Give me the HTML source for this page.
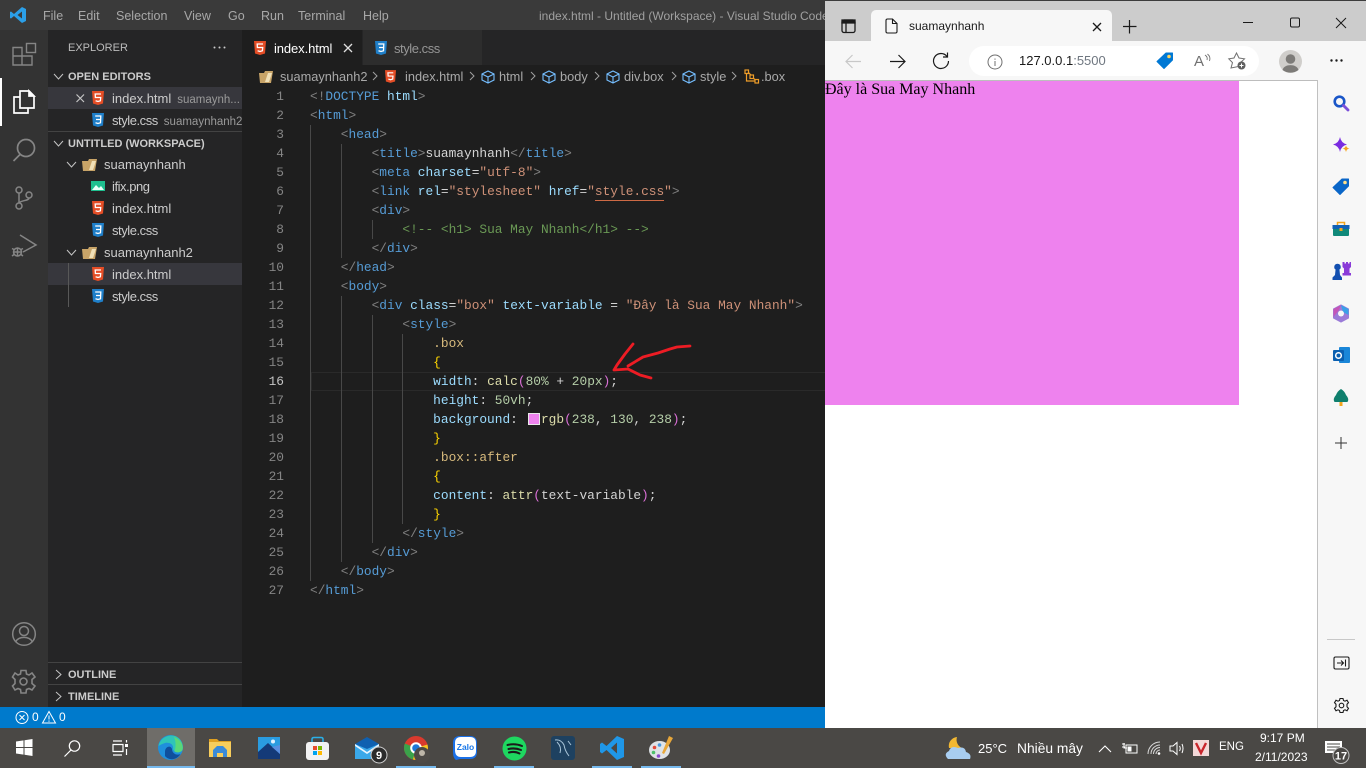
<!DOCTYPE html>
<html><head><meta charset="utf-8"><title>VS Code</title>
<style>
html,body{margin:0;padding:0;width:1366px;height:768px;overflow:hidden;background:#1e1e1e;font-family:"Liberation Sans","Noto Sans CJK SC",sans-serif}
.a{position:absolute}
.t{position:absolute;white-space:nowrap;line-height:20px}
svg{position:absolute;overflow:visible}
.m{position:absolute;top:6px;font-size:12.5px;color:#a8a8a8;line-height:20px}
.e{position:absolute;left:48px;width:194px;height:22px}
.f{position:absolute;font-size:13px;color:#cccccc;line-height:22px;white-space:nowrap;margin-top:1px}
.cs{letter-spacing:-.45px}
.d{color:#9a9a9a;font-size:11.5px;margin-left:6px;letter-spacing:0}
.h{position:absolute;font-size:11px;font-weight:bold;color:#cccccc;line-height:22px;white-space:nowrap;margin-top:1px}
.ln{position:absolute;left:243px;width:41px;text-align:right;font:12.83px/19px "Liberation Mono",monospace;color:#858585}
.c{position:absolute;left:310px;white-space:pre;font:12.83px/19px "Liberation Mono",monospace;color:#d4d4d4}
.g{color:#808080}.b{color:#569cd6}.r{color:#9cdcfe}.s{color:#ce9178}.k{color:#6a9955}.y{color:#d7ba7d}.n{color:#b5cea8}.u{color:#dcdcaa}.w{color:#ffd700}.p{color:#da70d6}
.gd{position:absolute;width:1px;background:#484848}
.bc{position:absolute;top:68px;font-size:12.8px;line-height:18px;color:#a9a9a9;white-space:nowrap}
.tb{position:absolute;top:766px;height:2px;background:#76b9ed}
</style></head><body>

<!-- title bar -->
<div class="a" style="left:0;top:0;width:825px;height:30px;background:#3a3a3a"></div>
<svg style="left:9px;top:6px" width="18" height="18" viewBox="0 0 18 18"><path d="M13 1 L17 3 V15 L13 17 L5 10 L2 12.500 L1 12 V6 L2 5.500 L5 8 Z M13 5.500 L8.500 9 L13 12.500 Z" fill="#2b9fe8" fill-rule="evenodd"/></svg>
<div class="m" style="left:43px">File</div>
<div class="m" style="left:78px">Edit</div>
<div class="m" style="left:116px">Selection</div>
<div class="m" style="left:184px">View</div>
<div class="m" style="left:228px">Go</div>
<div class="m" style="left:261px">Run</div>
<div class="m" style="left:298px">Terminal</div>
<div class="m" style="left:363px">Help</div>
<div class="m" style="left:539px;width:286px;overflow:hidden;white-space:nowrap;color:#a0a0a0;font-size:12px">index.html - Untitled (Workspace) - Visual Studio Code</div>

<!-- activity bar -->
<div class="a" style="left:0;top:30px;width:48px;height:677px;background:#333333"></div>
<div class="a" style="left:0;top:78px;width:2px;height:48px;background:#fff"></div>
<svg style="left:12px;top:42px" width="25" height="25" fill="none" stroke="#858585" stroke-width="1.400"><path d="M1 5.500H10V23H1ZM1 14H20V23H10"/><rect x="14.500" y="1.500" width="9" height="9"/></svg>
<svg style="left:13px;top:90px" width="23" height="24" fill="none" stroke="#ffffff" stroke-width="1.700"><path d="M7 7H1V23H15V18"/><path d="M7 1H16L21 6V18H7Z"/><path d="M16 1L21 6H16Z" fill="#fff"/></svg>
<svg style="left:13px;top:138px" width="23" height="24" fill="none" stroke="#858585" stroke-width="1.700"><circle cx="13" cy="10" r="8.500"/><path d="M7 16.500L0.500 23"/></svg>
<svg style="left:14px;top:186px" width="21" height="24" fill="none" stroke="#858585" stroke-width="1.500"><circle cx="5" cy="4" r="3"/><circle cx="5" cy="20" r="3"/><circle cx="15" cy="9" r="3"/><path d="M5 7V17M15 12C15 15 7 14 5 17"/></svg>
<svg style="left:11px;top:233px" width="26" height="26" fill="none" stroke="#858585" stroke-width="1.500"><path d="M9 2 L25 12 L12 19"/><circle cx="6.500" cy="19" r="4"/><path d="M1 15.500L3 16.500M1 23L3 21.500M12 15.500L10 16.500M12 23L10 21.500M2 19H11M6.500 15V23"/></svg>
<svg style="left:12px;top:622px" width="25" height="25" fill="none" stroke="#858585" stroke-width="1.500"><circle cx="12" cy="12" r="11.300"/><circle cx="12" cy="9" r="4.500"/><path d="M4 19.500C6 14 18 14 20 19.500"/></svg>
<svg style="left:11px;top:669px" width="26" height="26" fill="none" stroke="#858585" stroke-width="1.600"><path d="M10 1.500H15L15.500 5L18 6L21 4L24 8L21 10.500V14.500L24 17L21 21L18 19.500L15.500 20.500L15 24H10L9.500 20.500L7 19.500L4 21L1.500 17L4 14.500V10.500L1.500 8L4 4L7 6L9.500 5Z"/><circle cx="12.500" cy="12.500" r="3.500"/></svg>

<!-- sidebar -->
<div class="a" style="left:48px;top:30px;width:194px;height:677px;background:#252526"></div>
<div class="t" style="left:68px;top:38px;font-size:11px;color:#bbbbbb">EXPLORER</div>
<svg style="left:213px;top:46px" width="14" height="3" fill="#cccccc"><circle cx="1.500" cy="1.500" r="1"/><circle cx="6.500" cy="1.500" r="1"/><circle cx="11.500" cy="1.500" r="1"/></svg>
<svg style="left:53px;top:72px" width="12" height="10" fill="none" stroke="#c5c5c5" stroke-width="1"><path d="M1 2L5.500 7L10 2"/></svg>
<div class="h" style="left:68px;top:65px">OPEN EDITORS</div>
<div class="e" style="top:87px;background:#37373d"></div>
<svg style="left:76px;top:94px" width="9" height="9" fill="none" stroke="#c5c5c5" stroke-width="1.200"><path d="M0.500 0.500L8 8M8 0.500L0.500 8"/></svg>
<svg style="left:92px;top:91px" width="12" height="14" viewBox="0 0 12 14"><path d="M0 0H12L11 12.500L6 14L1 12.500Z" fill="#e44d26"/><path d="M9 3H3.200L3.400 6.500H8.700L8.400 9.800L6 10.500L3.600 9.800" fill="none" stroke="#fff" stroke-width="1.300"/></svg>
<div class="f" style="left:112px;top:87px;width:130px;overflow:hidden">index.html<span class="d">suamaynh...</span></div>
<svg style="left:92px;top:113px" width="12" height="14" viewBox="0 0 12 14"><path d="M0 0H12L11 12.500L6 14L1 12.500Z" fill="#1f7fc9"/><path d="M3.200 3H8.800L8.500 9.800L6 10.500L3.500 9.800M4 6.500H8.500" fill="none" stroke="#fff" stroke-width="1.300"/></svg>
<div class="f cs" style="left:112px;top:109px;width:130px;overflow:hidden">style.css<span class="d">suamaynhanh2</span></div>
<div class="a" style="left:48px;top:131px;width:194px;height:1px;background:#434343"></div>
<svg style="left:53px;top:139px" width="12" height="10" fill="none" stroke="#c5c5c5" stroke-width="1"><path d="M1 2L5.500 7L10 2"/></svg>
<div class="h" style="left:68px;top:132px">UNTITLED (WORKSPACE)</div>
<svg style="left:66px;top:160px" width="12" height="10" fill="none" stroke="#c5c5c5" stroke-width="1"><path d="M1 2L5.500 7L10 2"/></svg>
<svg style="left:82px;top:158px" width="16" height="14"><path d="M0 3H6L7 1H15L13 13H1Z" fill="#c8a468"/><path d="M10 3H14L11 12H7Z" fill="#f0e0b8"/></svg>
<div class="f" style="left:104px;top:153px">suamaynhanh</div>
<svg style="left:91px;top:181px" width="14" height="11"><rect width="14" height="10" fill="#1fbf8f"/><path d="M1 9L5 4L8 7L10 5L13 9Z" fill="#e8fff8"/></svg>
<div class="f cs" style="left:112px;top:175px">ifix.png</div>
<svg style="left:92px;top:201px" width="12" height="14" viewBox="0 0 12 14"><path d="M0 0H12L11 12.500L6 14L1 12.500Z" fill="#e44d26"/><path d="M9 3H3.200L3.400 6.500H8.700L8.400 9.800L6 10.500L3.600 9.800" fill="none" stroke="#fff" stroke-width="1.300"/></svg>
<div class="f" style="left:112px;top:197px">index.html</div>
<svg style="left:92px;top:223px" width="12" height="14" viewBox="0 0 12 14"><path d="M0 0H12L11 12.500L6 14L1 12.500Z" fill="#1f7fc9"/><path d="M3.200 3H8.800L8.500 9.800L6 10.500L3.500 9.800M4 6.500H8.500" fill="none" stroke="#fff" stroke-width="1.300"/></svg>
<div class="f cs" style="left:112px;top:219px">style.css</div>
<svg style="left:66px;top:248px" width="12" height="10" fill="none" stroke="#c5c5c5" stroke-width="1"><path d="M1 2L5.500 7L10 2"/></svg>
<svg style="left:82px;top:246px" width="16" height="14"><path d="M0 3H6L7 1H15L13 13H1Z" fill="#c8a468"/><path d="M10 3H14L11 12H7Z" fill="#f0e0b8"/></svg>
<div class="f" style="left:104px;top:241px">suamaynhanh2</div>
<div class="e" style="top:263px;background:#37373d"></div>
<div class="a" style="left:68px;top:263px;width:1px;height:44px;background:#585858"></div>
<svg style="left:92px;top:267px" width="12" height="14" viewBox="0 0 12 14"><path d="M0 0H12L11 12.500L6 14L1 12.500Z" fill="#e44d26"/><path d="M9 3H3.200L3.400 6.500H8.700L8.400 9.800L6 10.500L3.600 9.800" fill="none" stroke="#fff" stroke-width="1.300"/></svg>
<div class="f" style="left:112px;top:263px">index.html</div>
<svg style="left:92px;top:289px" width="12" height="14" viewBox="0 0 12 14"><path d="M0 0H12L11 12.500L6 14L1 12.500Z" fill="#1f7fc9"/><path d="M3.200 3H8.800L8.500 9.800L6 10.500L3.500 9.800M4 6.500H8.500" fill="none" stroke="#fff" stroke-width="1.300"/></svg>
<div class="f cs" style="left:112px;top:285px">style.css</div>
<div class="a" style="left:48px;top:662px;width:194px;height:1px;background:#434343"></div>
<svg style="left:54px;top:669px" width="10" height="12" fill="none" stroke="#c5c5c5" stroke-width="1"><path d="M2 1L7 5.500L2 10"/></svg>
<div class="h" style="left:68px;top:663px">OUTLINE</div>
<div class="a" style="left:48px;top:684px;width:194px;height:1px;background:#434343"></div>
<svg style="left:54px;top:691px" width="10" height="12" fill="none" stroke="#c5c5c5" stroke-width="1"><path d="M2 1L7 5.500L2 10"/></svg>
<div class="h" style="left:68px;top:685px">TIMELINE</div>

<!-- tabs -->
<div class="a" style="left:242px;top:30px;width:583px;height:35px;background:#252526"></div>
<div class="a" style="left:242px;top:30px;width:120px;height:35px;background:#1e1e1e"></div>
<div class="a" style="left:363px;top:30px;width:119px;height:35px;background:#2d2d2d"></div>
<svg style="left:254px;top:41px" width="12" height="14" viewBox="0 0 12 14"><path d="M0 0H12L11 12.500L6 14L1 12.500Z" fill="#e44d26"/><path d="M9 3H3.200L3.400 6.500H8.700L8.400 9.800L6 10.500L3.600 9.800" fill="none" stroke="#fff" stroke-width="1.300"/></svg>
<div class="f" style="left:274px;top:37px;color:#ffffff;letter-spacing:-.1px">index.html</div>
<svg style="left:343px;top:43px" width="10" height="10" fill="none" stroke="#e0e0e0" stroke-width="1.300"><path d="M1 1L9 9M9 1L1 9"/></svg>
<svg style="left:375px;top:41px" width="12" height="14" viewBox="0 0 12 14"><path d="M0 0H12L11 12.500L6 14L1 12.500Z" fill="#1f7fc9"/><path d="M3.200 3H8.800L8.500 9.800L6 10.500L3.500 9.800M4 6.500H8.500" fill="none" stroke="#fff" stroke-width="1.300"/></svg>
<div class="f cs" style="left:394px;top:37px;color:#969696">style.css</div>

<!-- breadcrumbs -->
<svg style="left:259px;top:71px" width="14" height="12"><path d="M0 2H5L6 0H14L12 12H1Z" fill="#c8a468"/><path d="M9 2H13L10 11H6Z" fill="#f0e0b8"/></svg>
<div class="bc" style="left:280px">suamaynhanh2</div>
<svg style="left:372px;top:71px" width="6" height="10" fill="none" stroke="#a0a0a0"><path d="M1 1L5 5L1 9"/></svg>
<svg style="left:385px;top:70px" width="11" height="13" viewBox="0 0 12 14"><path d="M0 0H12L11 12.500L6 14L1 12.500Z" fill="#e44d26"/><path d="M9 3H3.200L3.400 6.500H8.700L8.400 9.800L6 10.500L3.600 9.800" fill="none" stroke="#fff" stroke-width="1.300"/></svg>
<div class="bc" style="left:405px">index.html</div>
<svg style="left:469px;top:71px" width="6" height="10" fill="none" stroke="#a0a0a0"><path d="M1 1L5 5L1 9"/></svg>
<svg style="left:481px;top:70px" width="15" height="14" fill="none" stroke="#75beff" stroke-width="1.100"><path d="M7 1L13 4V10L7 13L1 10V4ZM1 4L7 7L13 4M7 7V13"/></svg>
<div class="bc" style="left:499px">html</div>
<svg style="left:530px;top:71px" width="6" height="10" fill="none" stroke="#a0a0a0"><path d="M1 1L5 5L1 9"/></svg>
<svg style="left:542px;top:70px" width="15" height="14" fill="none" stroke="#75beff" stroke-width="1.100"><path d="M7 1L13 4V10L7 13L1 10V4ZM1 4L7 7L13 4M7 7V13"/></svg>
<div class="bc" style="left:560px">body</div>
<svg style="left:594px;top:71px" width="6" height="10" fill="none" stroke="#a0a0a0"><path d="M1 1L5 5L1 9"/></svg>
<svg style="left:606px;top:70px" width="15" height="14" fill="none" stroke="#75beff" stroke-width="1.100"><path d="M7 1L13 4V10L7 13L1 10V4ZM1 4L7 7L13 4M7 7V13"/></svg>
<div class="bc" style="left:624px">div.box</div>
<svg style="left:671px;top:71px" width="6" height="10" fill="none" stroke="#a0a0a0"><path d="M1 1L5 5L1 9"/></svg>
<svg style="left:682px;top:70px" width="15" height="14" fill="none" stroke="#75beff" stroke-width="1.100"><path d="M7 1L13 4V10L7 13L1 10V4ZM1 4L7 7L13 4M7 7V13"/></svg>
<div class="bc" style="left:700px">style</div>
<svg style="left:731px;top:71px" width="6" height="10" fill="none" stroke="#a0a0a0"><path d="M1 1L5 5L1 9"/></svg>
<svg style="left:744px;top:69px" width="16" height="15" fill="none" stroke="#ee9d28" stroke-width="1.200"><rect x="1" y="1" width="3.500" height="3.500"/><rect x="6" y="6" width="3.500" height="3.500"/><rect x="11" y="10.500" width="3.500" height="3.500"/><path d="M4 3L7 6M9 9L11.500 11M2.500 5V12H11"/></svg>
<div class="bc" style="left:761px">.box</div>

<!-- line numbers -->
<div class="ln" style="top:87px">1<br>2<br>3<br>4<br>5<br>6<br>7<br>8<br>9<br>10<br>11<br>12<br>13<br>14<br>15<br><span style="color:#c6c6c6">16</span><br>17<br>18<br>19<br>20<br>21<br>22<br>23<br>24<br>25<br>26<br>27</div>

<!-- current line -->
<div class="a" style="left:311px;top:372px;width:514px;height:17px;border-top:1px solid #2a2a2a;border-bottom:1px solid #2a2a2a;border-left:1px solid #2a2a2a"></div>

<!-- indent guides -->
<div class="gd" style="left:310px;top:125px;height:456px"></div>
<div class="gd" style="left:341px;top:144px;height:114px"></div>
<div class="gd" style="left:341px;top:296px;height:266px"></div>
<div class="gd" style="left:372px;top:220px;height:19px"></div>
<div class="gd" style="left:372px;top:315px;height:228px"></div>
<div class="gd" style="left:402px;top:334px;height:190px"></div>

<!-- code -->
<div class="c" style="top:87px"><span class="g">&lt;!</span><span class="b">DOCTYPE</span> <span class="r">html</span><span class="g">&gt;</span>
<span class="g">&lt;</span><span class="b">html</span><span class="g">&gt;</span>
    <span class="g">&lt;</span><span class="b">head</span><span class="g">&gt;</span>
        <span class="g">&lt;</span><span class="b">title</span><span class="g">&gt;</span>suamaynhanh<span class="g">&lt;/</span><span class="b">title</span><span class="g">&gt;</span>
        <span class="g">&lt;</span><span class="b">meta</span> <span class="r">charset</span>=<span class="s">"utf-8"</span><span class="g">&gt;</span>
        <span class="g">&lt;</span><span class="b">link</span> <span class="r">rel</span>=<span class="s">"stylesheet"</span> <span class="r">href</span>=<span class="s">"style.css"</span><span class="g">&gt;</span>
        <span class="g">&lt;</span><span class="b">div</span><span class="g">&gt;</span>
            <span class="k">&lt;!-- &lt;h1&gt; Sua May Nhanh&lt;/h1&gt; --&gt;</span>
        <span class="g">&lt;/</span><span class="b">div</span><span class="g">&gt;</span>
    <span class="g">&lt;/</span><span class="b">head</span><span class="g">&gt;</span>
    <span class="g">&lt;</span><span class="b">body</span><span class="g">&gt;</span>
        <span class="g">&lt;</span><span class="b">div</span> <span class="r">class</span>=<span class="s">"box"</span> <span class="r">text-variable</span> = <span class="s">"Đây là Sua May Nhanh"</span><span class="g">&gt;</span>
            <span class="g">&lt;</span><span class="b">style</span><span class="g">&gt;</span>
                <span class="y">.box</span>
                <span class="w">{</span>
                <span class="r">width</span>: <span class="u">calc</span><span class="p">(</span><span class="n">80%</span> + <span class="n">20px</span><span class="p">)</span>;
                <span class="r">height</span>: <span class="n">50vh</span>;
                <span class="r">background</span>:  <span style="color:#c8c8c8"> </span><span class="u">rgb</span><span class="p">(</span><span class="n">238</span>, <span class="n">130</span>, <span class="n">238</span><span class="p">)</span>;
                <span class="w">}</span>
                <span class="y">.box::after</span>
                <span class="w">{</span>
                <span class="r">content</span>: <span class="u">attr</span><span class="p">(</span>text-variable<span class="p">)</span>;
                <span class="w">}</span>
            <span class="g">&lt;/</span><span class="b">style</span><span class="g">&gt;</span>
        <span class="g">&lt;/</span><span class="b">div</span><span class="g">&gt;</span>
    <span class="g">&lt;/</span><span class="b">body</span><span class="g">&gt;</span>
<span class="g">&lt;/</span><span class="b">html</span><span class="g">&gt;</span></div>
<div class="a" style="left:595px;top:200px;width:69px;height:1px;background:#ce6a45"></div>
<div class="a" style="left:528px;top:413px;width:10px;height:10px;background:#ee82ee;border:1px solid #e8e8e8"></div>

<!-- red arrow -->
<svg style="left:0;top:0" width="825" height="400" fill="none" stroke="#ed1c24" stroke-width="2.800" stroke-linecap="round" stroke-linejoin="round"><path d="M633 344L625 354L617 365L614 370L628 369L640 375L651 378"/><path d="M628 366L643 357L658 353L670 349L677 347L690 346"/></svg>

<!-- status bar -->
<div class="a" style="left:0;top:707px;width:825px;height:21px;background:#007acc"></div>
<svg style="left:15px;top:711px" width="14" height="14" fill="none" stroke="#fff" stroke-width="1"><circle cx="7" cy="6.500" r="6"/><path d="M4.500 4L9.500 9M9.500 4L4.500 9"/></svg>
<div class="t" style="left:32px;top:707px;font-size:12px;color:#fff">0</div>
<svg style="left:42px;top:711px" width="14" height="14" fill="none" stroke="#fff" stroke-width="1"><path d="M7 0.500L13.500 12H0.500ZM7 4.500V8.500M7 9.500V10.800"/></svg>
<div class="t" style="left:59px;top:707px;font-size:12px;color:#fff">0</div>

<!-- browser -->
<div class="a" style="left:825px;top:0;width:541px;height:728px;background:#fff"></div>
<div class="a" style="left:825px;top:0;width:541px;height:1px;background:#3c3c3c"></div>
<div class="a" style="left:825px;top:1px;width:541px;height:40px;background:#cccccc"></div>
<div class="a" style="left:825px;top:41px;width:541px;height:39px;background:#f7f7f7"></div>
<div class="a" style="left:825px;top:80px;width:492px;height:1px;background:#bdbdbd"></div>
<div class="a" style="left:871px;top:10px;width:241px;height:32px;background:#f7f7f7;border-radius:5px 5px 0 0"></div>
<svg style="left:841px;top:19px" width="16" height="15" fill="none" stroke="#1a1a1a" stroke-width="1.300"><rect x="1" y="1" width="13" height="12.500" rx="2"/><path d="M5 4V13.500"/><path d="M1 1H14V4H1Z" fill="#1a1a1a"/></svg>
<svg style="left:885px;top:18px" width="13" height="16" fill="none" stroke="#1a1a1a" stroke-width="1.100"><path d="M1 2.500Q1 1 2.500 1H7.500L12 5.500V13.500Q12 15 10.500 15H2.500Q1 15 1 13.500ZM7.500 1V5.500H12"/></svg>
<div class="t" style="left:909px;top:16px;font-size:12px;color:#1a1a1a">suamaynhanh</div>
<svg style="left:1092px;top:22px" width="10" height="10" fill="none" stroke="#1a1a1a" stroke-width="1.300"><path d="M1 1L9 9M9 1L1 9"/></svg>
<svg style="left:1122px;top:19px" width="15" height="15" fill="none" stroke="#1a1a1a" stroke-width="1.200"><path d="M7.500 1V14.500M1 7.500H14.500"/></svg>
<svg style="left:1234px;top:17px" width="130" height="12" fill="none" stroke="#1a1a1a" stroke-width="1"><path d="M9 5.500H19"/><rect x="56.500" y="1" width="9" height="9" rx="1.500"/><path d="M102 1L112 11M112 1L102 11"/></svg>
<svg style="left:845px;top:54px" width="17" height="15" fill="none" stroke="#c8c8c8" stroke-width="1.200"><path d="M16 7.500H1M7.500 1L1 7.500L7.500 14"/></svg>
<svg style="left:889px;top:54px" width="17" height="15" fill="none" stroke="#1a1a1a" stroke-width="1.200"><path d="M1 7.500H16M9.500 1L16 7.500L9.500 14"/></svg>
<svg style="left:932px;top:52px" width="18" height="18" fill="none" stroke="#1a1a1a" stroke-width="1.200"><path d="M15 4.500A7.500 7.500 0 1 0 16.500 9M15.500 0.500V5H11"/></svg>
<div class="a" style="left:969px;top:46px;width:290px;height:30px;background:#fff;border-radius:15px"></div>
<svg style="left:987px;top:54px" width="16" height="16" fill="none" stroke="#707070" stroke-width="1"><circle cx="8" cy="8" r="7"/><path d="M8 7V12M8 4.500V5.700"/></svg>
<div class="t" style="left:1019px;top:51px;font-size:13px;color:#1a1a1a">127.0.0.1<span style="color:#6f7780">:5500</span></div>
<svg style="left:1156px;top:52px" width="18" height="18"><path d="M10 1H16.500V8L8 16.500L1 9.500Z" fill="#0078d4" stroke="#0078d4" stroke-linejoin="round"/><circle cx="13" cy="4.500" r="1.800" fill="#ffd560"/></svg>
<div class="t" style="left:1194px;top:52px;font-size:15px;color:#707070">A</div>
<svg style="left:1204px;top:54px" width="8" height="9" fill="none" stroke="#707070" stroke-width=".9"><path d="M1 1Q4 3 3 6M3.500 0Q7 3 5.500 7"/></svg>
<svg style="left:1228px;top:52px" width="19" height="18"><path d="M8.500 1L11 6L16.500 6.800L12.500 10.600L13 14L3 16L4.500 10.600L0.800 6.800L6 6Z" fill="none" stroke="#707070" stroke-width="1"/><circle cx="13.500" cy="13.500" r="4" fill="#5f5f5f"/><path d="M13.500 11.500V15.500M11.500 13.500H15.500" stroke="#fff" stroke-width="1"/></svg>
<div class="a" style="left:1279px;top:50px;width:23px;height:23px;border-radius:50%;background:#d0cecb"></div>
<svg style="left:1279px;top:50px" width="23" height="23"><circle cx="11.500" cy="9" r="4.800" fill="#7d7b78"/><path d="M3.500 20C5 13.500 18 13.500 19.500 20C15 23.500 8 23.500 3.500 20Z" fill="#7d7b78"/></svg>
<svg style="left:1330px;top:59px" width="14" height="4" fill="#1a1a1a"><circle cx="1.500" cy="1.500" r="1.200"/><circle cx="6.500" cy="1.500" r="1.200"/><circle cx="11.500" cy="1.500" r="1.200"/></svg>

<!-- page content -->
<div class="a" style="left:825px;top:81px;width:414px;height:324px;background:#ee82ee"></div>
<div class="a" style="left:825px;top:81px;font:16px/18px 'Liberation Serif',serif;color:#000;white-space:nowrap">Đây là Sua May Nhanh</div>

<!-- edge sidebar -->
<div class="a" style="left:1317px;top:80px;width:49px;height:648px;background:#f7f7f7;border-left:1px solid #c0c0c0;box-sizing:border-box"></div>
<svg style="left:1333px;top:95px" width="16" height="17" fill="none"><circle cx="6.500" cy="6.500" r="4.800" stroke="#1a56c8" stroke-width="2.600"/><path d="M10.500 10.500L15 15" stroke="#7b4fd8" stroke-width="2.800" stroke-linecap="round"/></svg>
<svg style="left:1332px;top:136px" width="19" height="18"><path d="M8 1Q9 7 15 8.500Q9 10 8 16Q7 10 1 8.500Q7 7 8 1Z" fill="#7a2be0"/><path d="M14 9.500Q14.500 12 17.500 12.500Q14.500 13 14 16Q13.500 13 10.500 12.500Q13.500 12 14 9.500Z" fill="#f5a623"/></svg>
<svg style="left:1332px;top:178px" width="18" height="18"><path d="M10 1H16.500V8L8 16.500L1 9.500Z" fill="#0a66c8" stroke="#0a66c8" stroke-linejoin="round"/><circle cx="13" cy="4.500" r="1.800" fill="#ffe08a"/></svg>
<svg style="left:1332px;top:221px" width="18" height="16"><rect x="1" y="4" width="16" height="11" rx="1" fill="#10897a"/><rect x="0.500" y="4" width="17" height="4" fill="#1261b5"/><path d="M5.500 4V1.500H12.500V4" fill="none" stroke="#f2a51e" stroke-width="1.500"/><rect x="7.500" y="7" width="3" height="3" fill="#f2a51e"/></svg>
<svg style="left:1332px;top:262px" width="19" height="19"><path d="M10.500 0H12.500V1.500H14V0H16V1.500H17.500V0H19V5L17.500 6.500V11H19V13.500H10.500V11H12V6.500L10.500 5Z" fill="#8a3bd8"/><circle cx="5.500" cy="5" r="3.300" fill="#134fb0"/><path d="M3.500 8H7.500L8 13L10 15.500V18H0.500V15.500L3 13Z" fill="#134fb0"/></svg>
<svg style="left:1332px;top:304px" width="18" height="19"><path d="M9 1L16.500 5V14L9 18L1.500 14V5Z" fill="#9b7bd8" stroke="#9b7bd8" stroke-linejoin="round"/><path d="M9 1L16.500 5V11L11 8Z" fill="#3aa0e8"/><path d="M1.500 5L9 1L7 6L1.500 13Z" fill="#c455b8"/><circle cx="9" cy="9.500" r="3" fill="#f7f7f7"/></svg>
<svg style="left:1333px;top:347px" width="17" height="17"><rect x="6" y="0" width="11" height="16" rx="1" fill="#1a86d8"/><rect x="0" y="3" width="11" height="11" rx="1" fill="#0a5fb0"/><circle cx="5.500" cy="8.500" r="2.800" fill="none" stroke="#fff" stroke-width="1.500"/></svg>
<svg style="left:1333px;top:388px" width="16" height="18"><path d="M8 1Q11.500 3 13 7Q16.500 11 14.500 14H1.500Q-0.500 11 3 7Q4.500 3 8 1Z" fill="#0f7f6d"/><rect x="6.500" y="14" width="3" height="4" fill="#f2a51e"/></svg>
<svg style="left:1334px;top:436px" width="14" height="14" fill="none" stroke="#333" stroke-width="1"><path d="M7 1V13M1 7H13"/></svg>
<div class="a" style="left:1327px;top:639px;width:28px;height:1px;background:#c8c8c8"></div>
<svg style="left:1333px;top:656px" width="17" height="14" fill="none" stroke="#1a1a1a" stroke-width="1.100"><rect x="1" y="1" width="15" height="12" rx="1.500"/><path d="M4 7H10M8 4.500L10.500 7L8 9.500M12.500 3.500V10.500"/></svg>
<svg style="left:1333px;top:697px" width="17" height="17" fill="none" stroke="#1a1a1a" stroke-width="1.100"><path d="M7 1.500H10L10.500 3.500L12 4.200L14 3.200L15.500 5.700L14 7.200V9.800L15.500 11.300L14 13.800L12 12.800L10.500 13.500L10 15.500H7L6.500 13.500L5 12.800L3 13.800L1.500 11.300L3 9.800V7.200L1.500 5.700L3 3.200L5 4.200L6.500 3.500Z"/><circle cx="8.500" cy="8.500" r="2.300"/></svg>

<!-- taskbar -->
<div class="a" style="left:0;top:728px;width:1366px;height:40px;background:#4a4845"></div>
<div class="a" style="left:147px;top:728px;width:48px;height:40px;background:#6f6d69"></div>
<div class="tb" style="left:147px;width:48px"></div>
<div class="tb" style="left:396px;width:40px"></div>
<div class="tb" style="left:494px;width:40px"></div>
<div class="tb" style="left:592px;width:40px"></div>
<div class="tb" style="left:641px;width:40px"></div>
<svg style="left:16px;top:739px" width="17" height="17" fill="#fff"><path d="M0 2.500L7.500 1.400V8H0ZM8.500 1.200L16.500 0V8H8.500ZM0 9H7.500V15.600L0 14.500ZM8.500 9H16.500V17L8.500 15.800Z"/></svg>
<svg style="left:64px;top:740px" width="17" height="17" fill="none" stroke="#fff" stroke-width="1.200"><circle cx="10.500" cy="6" r="5.200"/><path d="M7 10L0.500 16.500"/></svg>
<svg style="left:112px;top:740px" width="17" height="16" fill="none" stroke="#fff" stroke-width="1.200"><path d="M1 1H10M1 15H10M1 4.500H11V11.500H1Z"/><rect x="13" y="4" width="3" height="3" fill="#fff" stroke="none"/><path d="M14.500 0V2.500M14.500 9V15"/></svg>
<svg style="left:158px;top:735px" width="25" height="25"><circle cx="12.500" cy="12.500" r="12.500" fill="#1f8fdc"/><path d="M0.500 11C2 3 10 -1 17 1C23 3 26 10 24.500 15C22 18.500 16 18 15 14C16 9 11 7 7 8C4 9 2 10 0.500 11Z" fill="#2fc4b8"/><path d="M16 2C22 4 26 10 24.500 15C23 17.500 19 18 16.500 16.500C18 12 18 6 16 2Z" fill="#5ad878"/><path d="M7 17C7 11 13 10 14 14C14 18 18 21 22.500 19C19 25 11 26 7 21Z" fill="#0f4f9c"/></svg>
<svg style="left:209px;top:739px" width="22" height="18"><path d="M0 0H8L10 2H22V6H0Z" fill="#e0a020"/><rect x="0" y="3" width="22" height="15" fill="#f7cd5c"/><path d="M4 11L8 7H14L18 11V18H14V14H8V18H4Z" fill="#3a8ad8"/></svg>
<svg style="left:258px;top:737px" width="22" height="22"><rect width="22" height="22" fill="#2a9ce0"/><path d="M0 22V15L10 6L22 17V22Z" fill="#143a78"/><path d="M14 10L22 8V17Z" fill="#5a8fe0"/><circle cx="15" cy="4.500" r="2" fill="#dff1ff"/></svg>
<svg style="left:306px;top:737px" width="23" height="23"><path d="M6 6V2Q6 0.500 8 0.500H15Q17 0.500 17 2V6" fill="none" stroke="#2ab0e8" stroke-width="1.500"/><rect x="0" y="5" width="23" height="18" rx="3" fill="#f2f2f2"/><rect x="7" y="9" width="4" height="4" fill="#e74c2a"/><rect x="12" y="9" width="4" height="4" fill="#7ab800"/><rect x="7" y="14" width="4" height="4" fill="#00a4ef"/><rect x="12" y="14" width="4" height="4" fill="#ffb900"/></svg>
<svg style="left:355px;top:737px" width="34" height="28"><rect x="0" y="7" width="24" height="15" fill="#3aa8ea"/><path d="M0 7L12 0L24 7L12 12Z" fill="#0f60b0"/><path d="M0 7L12 15L24 7V9L12 17L0 9Z" fill="#e8f5ff"/><circle cx="24" cy="18" r="8" fill="#2b2b2b" stroke="#cccccc" stroke-width="1"/><text x="24" y="22" text-anchor="middle" font-size="11" font-weight="bold" fill="#fff" font-family="Liberation Sans">9</text></svg>
<svg style="left:404px;top:736px" width="28" height="28"><circle cx="12" cy="12" r="12" fill="#d93a2e"/><path d="M12 12L0.800 7.500A12 12 0 0 0 9 23.500Z" fill="#3aa24a"/><path d="M12 12L23.500 8.500A12 12 0 0 1 9 23.500Z" fill="#f6c620"/><circle cx="12" cy="12" r="4.800" fill="#1f77d8" stroke="#fff" stroke-width="2"/><circle cx="18" cy="19" r="8" fill="#4e4a46"/><circle cx="18" cy="17" r="3" fill="#bfb6a8"/></svg>
<svg style="left:453px;top:736px" width="24" height="24"><path d="M0 16V7Q0 0 7 0H17Q24 0 24 7V16Q24 23 17 23H7L3 24Q0 22 0 16Z" fill="#1a70e8"/><path d="M2 14V7Q2 1 8 1H17Q23 1 23 7V15Q23 21 17 21H8Q2 21 2 14Z" fill="#fff"/><text x="12.500" y="14" text-anchor="middle" font-size="8.500" font-weight="bold" fill="#1a78e8" font-family="Liberation Sans">Zalo</text></svg>
<svg style="left:502px;top:736px" width="25" height="25" fill="none"><circle cx="12.500" cy="12.500" r="12" fill="#1ed760"/><path d="M5.500 9Q13 7 20 10M6.500 13Q13 11.500 19 14M7 16.500Q13 15 17.500 17.500" stroke="#1a1a1a" stroke-width="2" stroke-linecap="round"/></svg>
<svg style="left:551px;top:736px" width="24" height="24" fill="none"><rect width="24" height="24" rx="3" fill="#1e4160"/><path d="M4 4Q10 3 13 9Q14 15 18 20M6 6Q11 11 9 17M17 5L20 9" stroke="#a8c4d8" stroke-width="1"/></svg>
<svg style="left:600px;top:736px" width="24" height="24"><path d="M17 0L24 3V21L17 24L6.500 14L2 17.500L0 16V8L2 6.500L6.500 10ZM17 6.500L11 12L17 17.500Z" fill="#1f97e8" fill-rule="evenodd"/></svg>
<svg style="left:649px;top:736px" width="24" height="24"><ellipse cx="10.500" cy="14" rx="10.500" ry="9" fill="#dfe3e7"/><circle cx="5.500" cy="11.500" r="1.800" fill="#e24a3b"/><circle cx="10.500" cy="9" r="1.800" fill="#4a9ae0"/><circle cx="4.500" cy="16.500" r="1.800" fill="#4ec06b"/><circle cx="9.500" cy="20" r="1.800" fill="#8a4ad0"/><path d="M20 0L24 2L15 18L13 17Z" fill="#e8a73a"/></svg>

<svg style="left:945px;top:736px" width="27" height="24"><path d="M12 1A9 9 0 0 0 17 12L4 12A9 9 0 0 1 12 1Z" fill="#f2b833"/><path d="M3 23Q-2 18 4 15Q6 9 13 12Q20 10 21 16Q27 18 25 23Z" fill="#a8cdf0"/></svg>
<div class="t" style="left:978px;top:739px;font-size:13px;color:#ffffff">25°C</div>
<div class="t" style="left:1017px;top:739px;font-size:13.800px;color:#ffffff">Nhiều mây</div>
<svg style="left:1098px;top:744px" width="14" height="9" fill="none" stroke="#fff" stroke-width="1.100"><path d="M1 8L7 2L13 8"/></svg>
<svg style="left:1121px;top:741px" width="17" height="14" fill="none" stroke="#fff" stroke-width="1"><path d="M1 3H4M1 6H4M3 2V7H6"/><rect x="5" y="4" width="11" height="8"/><rect x="6.500" y="5.500" width="4" height="5" fill="#fff" stroke="none"/></svg>
<svg style="left:1147px;top:741px" width="15" height="15" fill="none" stroke="#d8d8d8" stroke-width="1"><path d="M1 13A12 12 0 0 1 13 1M1 13M4 13A9 9 0 0 1 13 4M6.500 13A6.500 6.500 0 0 1 13 6.500M9 13A4 4 0 0 1 13 9"/><circle cx="12" cy="12.500" r="1.300" fill="#fff" stroke="none"/></svg>
<svg style="left:1169px;top:741px" width="17" height="15" fill="none" stroke="#fff" stroke-width="1"><path d="M1 5H4L8 1.500V13.500L4 10H1Z"/><path d="M10.500 5Q12 7.500 10.500 10M13 3Q15 7.500 13 12"/></svg>
<svg style="left:1193px;top:740px" width="16" height="16"><rect width="16" height="16" fill="#f3d8d8"/><path d="M3 3L8 13L13 3" fill="none" stroke="#c9252c" stroke-width="2.400"/></svg>
<div class="t" style="left:1219px;top:737px;font-size:11.500px;color:#fff">ENG</div>
<div class="t" style="left:1260px;top:728px;font-size:12px;color:#fff">9:17 PM</div>
<div class="t" style="left:1255px;top:747px;font-size:12px;color:#fff">2/11/2023</div>
<svg style="left:1325px;top:740px" width="26" height="24"><path d="M0 1H17V13H0Z" fill="#fff"/><path d="M2 4H15M2 7H15M2 10H10" stroke="#4a4845" stroke-width="1"/><circle cx="16" cy="15.500" r="8" fill="#4a4845" stroke="#c0c0c0" stroke-width="1"/><text x="16" y="19.500" text-anchor="middle" font-size="11" font-weight="bold" fill="#fff" font-family="Liberation Sans">17</text></svg>
</body></html>
